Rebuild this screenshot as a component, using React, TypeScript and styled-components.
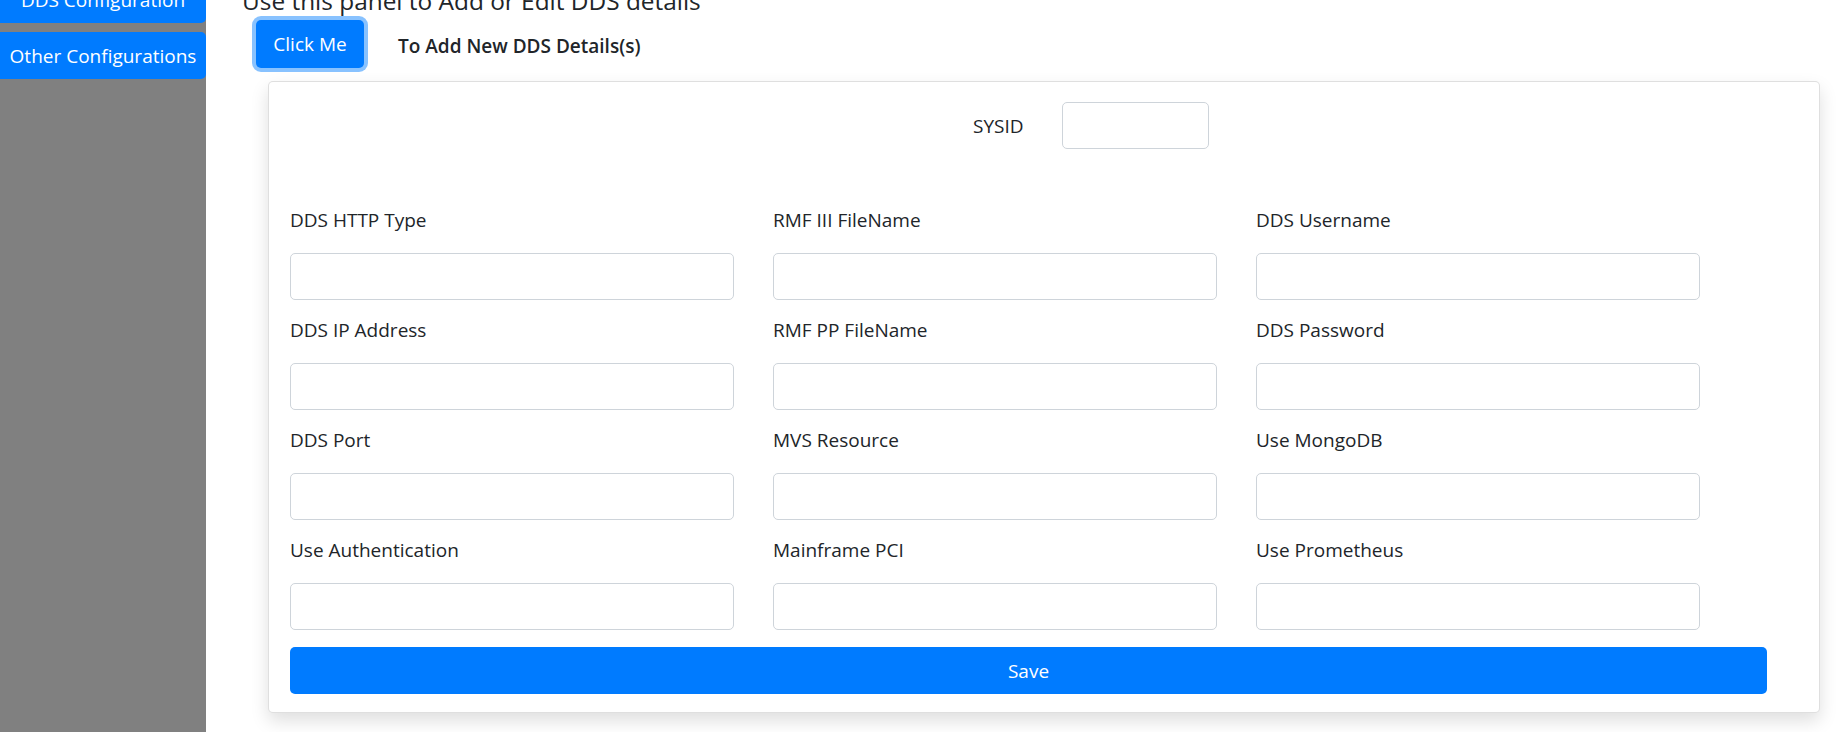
import React, { ReactElement } from 'react';
import styled, { createGlobalStyle } from 'styled-components';

const fields: string[][] = [
  ['DDS HTTP Type', 'RMF III FileName', 'DDS Username'],
  ['DDS IP Address', 'RMF PP FileName', 'DDS Password'],
  ['DDS Port', 'MVS Resource', 'Use MongoDB'],
  ['Use Authentication', 'Mainframe PCI', 'Use Prometheus'],
];

const menu = ['DDS Configuration', 'Other Configurations'];

const App: React.FC = (): ReactElement => (
  <>
    <GlobalStyle />
    <Page>
      <Sidebar>
        {menu.map((item) => (
          <MenuButton key={item}>{item}</MenuButton>
        ))}
      </Sidebar>

      <Main>
        <Heading>Use this panel to Add or Edit DDS details</Heading>

        <ActionRow>
          <PrimaryButton type="button">Click Me</PrimaryButton>
          <Hint>To Add New DDS Details(s)</Hint>
        </ActionRow>

        <Card>
          <SysRow>
            <SysLabel>SYSID</SysLabel>
            <SysInput />
          </SysRow>

          <FieldGrid>
            {fields.flat().map((name) => (
              <Field key={name}>
                <Label>{name}</Label>
                <Input />
              </Field>
            ))}
          </FieldGrid>

          <SaveButton type="button">Save</SaveButton>
        </Card>
      </Main>
    </Page>
  </>
);

const GlobalStyle = createGlobalStyle`
  html, body {
    margin: 0;
    padding: 0;
    overflow: hidden;
    background: #fff;
  }

  body {
    font-family: "Open Sans", "Noto Sans", sans-serif;
    color: #212529;
  }
`;

// page is shown scrolled down a little, as in the capture
const Page = styled.div`
  display: flex;
  margin-top: -24px;
  min-height: 756px;
`;

const Sidebar = styled.nav`
  display: flex;
  flex-direction: column;
  gap: 9px;
  width: 206px;
  flex-shrink: 0;
  background: #808080;
`;

const MenuButton = styled.button`
  height: 47px;
  width: 206px;
  border: none;
  border-radius: 0 5px 5px 0;
  background: #007bff;
  color: #fff;
  font-family: inherit;
  font-size: 19px;
  padding: 0;
`;

const Main = styled.main`
  display: flex;
  flex-direction: column;
  flex: 1;
  padding: 10px 17px 0 36px;
`;

const Heading = styled.h4`
  margin: 0 0 5px;
  font-size: 24.4px;
  font-weight: 500;
  line-height: 29px;
`;

const ActionRow = styled.div`
  display: flex;
  align-items: center;
  gap: 34px;
  margin-left: 14px;
`;

const PrimaryButton = styled.button`
  width: 108px;
  height: 48px;
  border: none;
  border-radius: 5px;
  background: #007bff;
  color: #fff;
  font-family: inherit;
  font-size: 19px;
  box-shadow: 0 0 0 4px rgba(38, 143, 255, 0.55);
`;

const Hint = styled.span`
  font-size: 19px;
  font-weight: 600;
  padding-top: 4px;
`;

const Card = styled.section`
  display: flex;
  flex-direction: column;
  margin: 13px 0 0 26px;
  padding: 20px 52px 18px 21px;
  border: 1px solid rgba(0, 0, 0, 0.125);
  border-radius: 5px;
  background: #fff;
  box-shadow: 0 8px 18px rgba(0, 0, 0, 0.13);
`;

const SysRow = styled.div`
  display: flex;
  align-items: center;
  gap: 38px;
  padding-left: 683px;
`;

const SysLabel = styled.label`
  font-size: 19px;
  line-height: 30px;
`;

const Input = styled.input`
  box-sizing: border-box;
  display: block;
  width: 100%;
  height: 47px;
  border: 1px solid #ced4da;
  border-radius: 5px;
  background: #fff;
  padding: 0 15px;
  font-family: inherit;
  font-size: 19px;
`;

const SysInput = styled(Input)`
  width: 147px;
`;

const FieldGrid = styled.div`
  display: grid;
  grid-template-columns: repeat(3, 444px);
  column-gap: 39px;
  row-gap: 15px;
  margin-top: 56px;
`;

const Field = styled.div`
  display: flex;
  flex-direction: column;
`;

const Label = styled.label`
  font-size: 19px;
  line-height: 30px;
  margin-bottom: 18px;
`;

const SaveButton = styled.button`
  margin-top: 17px;
  height: 47px;
  width: 100%;
  border: none;
  border-radius: 5px;
  background: #007bff;
  color: #fff;
  font-family: inherit;
  font-size: 19px;
`;

export default App;
